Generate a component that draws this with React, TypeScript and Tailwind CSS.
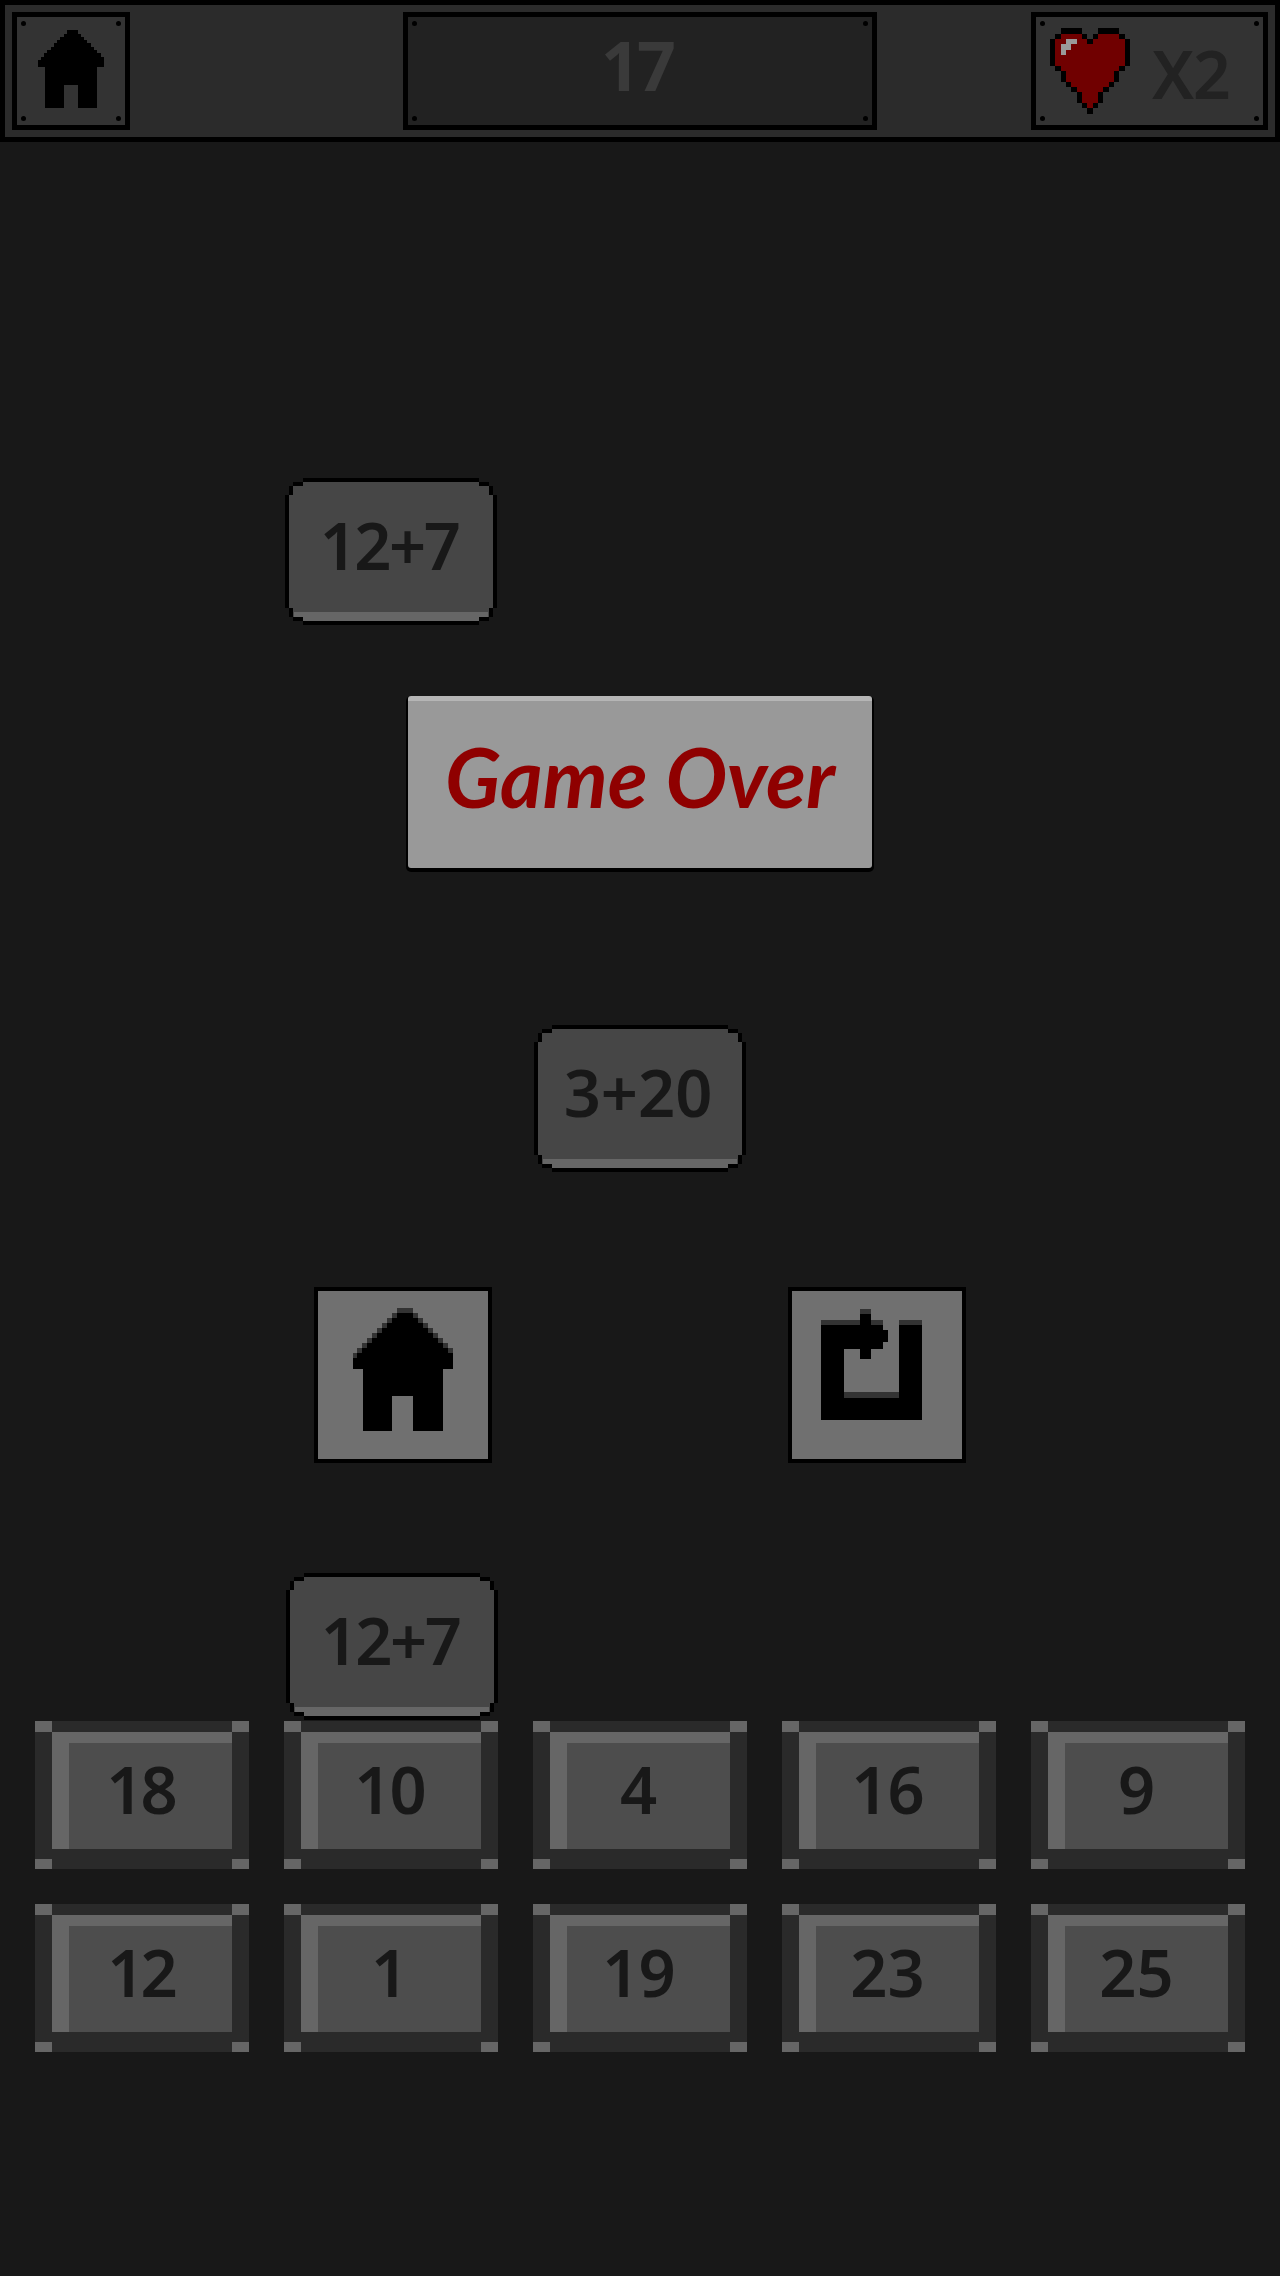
const HEART: Record<string, string> = {
  k: "#000000",
  r: "#700000",
  g: "#9a9a9a",
}

// 15 x 16 pixel heart, one letter per pixel
const HEART_ROWS = [
  "..kkkk...kkkk..",
  ".krrrrk.krrrrk.",
  "krrggrrkrrrrrrk",
  "krggrrrrrrrrrrk",
  "krgrrrrrrrrrrrk",
  "krrrrrrrrrrrrrk",
  "krrrrrrrrrrrrrk",
  ".krrrrrrrrrrrk.",
  "..krrrrrrrrrk..",
  "..krrrrrrrrrk..",
  "...krrrrrrrk...",
  "....krrrrrk....",
  ".....krrrk.....",
  ".....krrrk.....",
  "......krk......",
  ".......k.......",
]

function PixelHeart() {
  return (
    <svg viewBox="0 0 15 16" className="w-[80px] h-[86px]" shapeRendering="crispEdges">
      {HEART_ROWS.map((row, y) =>
        row.split("").map((c, x) =>
          c === "." ? null : <rect key={`${x}-${y}`} x={x} y={y} width="1" height="1" fill={HEART[c]} />
        )
      )}
    </svg>
  )
}

// staircase roof, drawn in the coordinates of a 100 x 123 box
function roofPath(dy: number) {
  let left = `M44 ${dy}`
  let right = ""
  for (let i = 0; i < 9; i++) {
    left = `${left} H${44 - 5 * i} V${dy + 5 * (i + 1)}`
  }
  left = `${left} H0`
  for (let i = 8; i >= 0; i--) {
    right = `${right} H${55 + 5 * i + 5} V${dy + 5 * i}`
  }
  return `${left} V61 H100 V${dy + 45} ${right} H55 Z`
}

function HomeIcon({ className }: { className: string }) {
  return (
    <svg viewBox="0 0 100 123" className={className} shapeRendering="crispEdges">
      <path d={roofPath(0)} fill="#333333" />
      <path d={roofPath(5)} fill="#000000" />
      <path d="M10 61H90V123H60V88H39V123H10Z" fill="#000000" />
    </svg>
  )
}

function RestartIcon() {
  return (
    <svg viewBox="115 110 320 345" className="w-[107px] h-[115px]" shapeRendering="crispEdges">
      <path d="M123 148H310V235H192V380H358V148H427V448H123Z" fill="#000000" />
      <path d="M123 148H240V165H123ZM273 148H310V165H273ZM358 148H427V165H358ZM192 365H358V382H192Z" fill="#333333" />
      <path d="M240 130H273V165H308V180H323V215H308V235H273V265H240Z" fill="#000000" />
      <rect x="240" y="115" width="33" height="15" fill="#333333" />
    </svg>
  )
}

function Rivets() {
  return (
    <>
      <span className="absolute left-[4px] top-[4px] w-[5px] h-[5px] bg-black rounded-full" />
      <span className="absolute right-[4px] top-[4px] w-[5px] h-[5px] bg-black rounded-full" />
      <span className="absolute left-[4px] bottom-[4px] w-[5px] h-[5px] bg-black rounded-full" />
      <span className="absolute right-[4px] bottom-[4px] w-[5px] h-[5px] bg-black rounded-full" />
    </>
  )
}

function EquationTile({ label, className, tracking }: { label: string; className: string; tracking: string }) {
  return (
    <div
      className={`absolute w-[212px] h-[147px] bg-black p-[4px] [clip-path:polygon(18px_0,calc(100%-18px)_0,calc(100%-18px)_4px,calc(100%-8px)_4px,calc(100%-8px)_8px,calc(100%-4px)_8px,calc(100%-4px)_17px,100%_17px,100%_calc(100%-17px),calc(100%-4px)_calc(100%-17px),calc(100%-4px)_calc(100%-8px),calc(100%-8px)_calc(100%-8px),calc(100%-8px)_calc(100%-4px),calc(100%-18px)_calc(100%-4px),calc(100%-18px)_100%,18px_100%,18px_calc(100%-4px),8px_calc(100%-4px),8px_calc(100%-8px),4px_calc(100%-8px),4px_calc(100%-17px),0_calc(100%-17px),0_17px,4px_17px,4px_8px,8px_8px,8px_4px,18px_4px)] ${className}`}
    >
      <div className="w-full h-full flex flex-col bg-[#464646] [clip-path:polygon(14px_0,calc(100%-14px)_0,calc(100%-14px)_4px,calc(100%-4px)_4px,calc(100%-4px)_13px,100%_13px,100%_calc(100%-13px),calc(100%-4px)_calc(100%-13px),calc(100%-4px)_calc(100%-4px),calc(100%-14px)_calc(100%-4px),calc(100%-14px)_100%,14px_100%,14px_calc(100%-4px),4px_calc(100%-4px),4px_calc(100%-13px),0_calc(100%-13px),0_13px,4px_13px,4px_4px,14px_4px)]">
        <div className={`flex-1 flex items-center justify-center pb-[4px] pr-[4px] font-['Noto_Sans',sans-serif] font-semibold text-[65px] leading-none text-[#181818] ${tracking}`}>
          {label}
        </div>
        <div className="h-[9px] mx-[5px] bg-[#666666]" />
      </div>
    </div>
  )
}

function AnswerTile({ value, tracking }: { value: number; tracking: string }) {
  return (
    <div className="relative h-[148px] bg-[#2a2a2a] pt-[11px] px-[17px] pb-[20px]">
      <span className="absolute left-0 top-0 w-[17px] h-[11px] bg-[#666666]" />
      <span className="absolute right-0 top-0 w-[17px] h-[11px] bg-[#666666]" />
      <span className="absolute left-0 bottom-0 w-[17px] h-[10px] bg-[#666666]" />
      <span className="absolute right-0 bottom-0 w-[17px] h-[10px] bg-[#666666]" />
      <div className={`h-full flex items-center justify-center pr-[20px] pb-[13px] border-t-[11px] border-l-[17px] border-[#666666] bg-[#4d4d4d] font-['Noto_Sans',sans-serif] font-semibold text-[65px] leading-none text-[#181818] ${tracking}`}>
        {value}
      </div>
    </div>
  )
}

// the reference font sets its 1 narrower than Noto Sans does
const ANSWERS = [
  { value: 18, tracking: "tracking-[-3px]" },
  { value: 10, tracking: "tracking-[-2px]" },
  { value: 4, tracking: "tracking-normal" },
  { value: 16, tracking: "tracking-[-1px]" },
  { value: 9, tracking: "tracking-normal" },
  { value: 12, tracking: "tracking-[-4px]" },
  { value: 1, tracking: "tracking-normal" },
  { value: 19, tracking: "tracking-[-1px]" },
  { value: 23, tracking: "tracking-normal" },
  { value: 25, tracking: "tracking-normal" },
]

export default function App() {
  return (
    <div className="relative w-[1280px] h-[2276px] bg-[#181818] overflow-hidden">
      <header className="h-[142px] flex items-center px-[7px] bg-[#2b2b2b] border-[5px] border-black">
        <div className="relative w-[118px] h-[118px] flex items-center justify-center pb-[7px] bg-[#333333] border-[5px] border-black">
          <Rivets />
          <HomeIcon className="w-[66px] h-[81px]" />
        </div>
        <div className="relative ml-[273px] w-[474px] h-[118px] flex items-center justify-center pb-[12px] pr-[6px] bg-[#222222] border-[5px] border-black font-['Noto_Sans',sans-serif] font-bold text-[68px] tracking-[-3px] leading-none text-[#3a3a3a]">
          <Rivets />
          17
        </div>
        <div className="relative ml-auto w-[237px] h-[118px] flex items-center pl-[14px] gap-[22px] bg-[#333333] border-[5px] border-black font-['Noto_Sans',sans-serif] font-semibold text-[66px] tracking-[-1px] leading-none text-[#222222]">
          <Rivets />
          <PixelHeart />
          <span className="pt-[3px]">X2</span>
        </div>
      </header>

      <EquationTile label="12+7" tracking="tracking-[-2.5px]" className="left-[285px] top-[478px]" />
      <EquationTile label="3+20" tracking="tracking-normal" className="left-[534px] top-[1025px]" />
      <EquationTile label="12+7" tracking="tracking-[-2.5px]" className="left-[286px] top-[1573px]" />

      <main className="flex flex-col">
        <div className="self-center mt-[554px] w-[464px] h-[172px] flex items-center justify-center pb-[18px] bg-[#999999] border-t-[5px] border-[#b5b5b5] rounded-[3px] shadow-[0_2px_0_2px_#000000] font-['Lato',sans-serif] italic font-bold text-[82px] leading-none text-[#8f0000]">
          Game Over
        </div>

        <div className="mt-[419px] px-[314px] flex justify-between">
          <div className="w-[178px] h-[176px] flex items-center justify-center pb-[12px] bg-[#707070] border-[4px] border-black">
            <HomeIcon className="w-[100px] h-[123px]" />
          </div>
          <div className="w-[178px] h-[176px] flex items-center justify-center pb-[22px] pr-[12px] bg-[#707070] border-[4px] border-black">
            <RestartIcon />
          </div>
        </div>

        <div className="mt-[258px] px-[35px] grid grid-cols-5 gap-[35px]">
          {ANSWERS.map((a) => (
            <AnswerTile key={a.value} value={a.value} tracking={a.tracking} />
          ))}
        </div>
      </main>
    </div>
  )
}
